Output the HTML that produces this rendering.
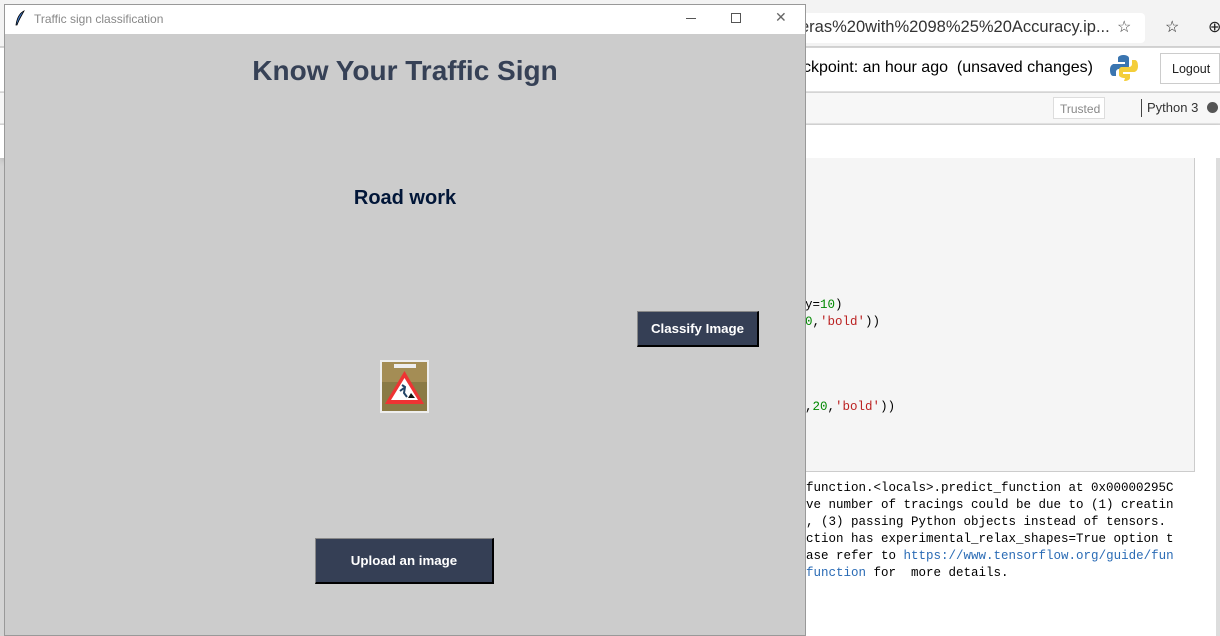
<!DOCTYPE html>
<html><head><style>
*{margin:0;padding:0;box-sizing:border-box}
body{width:1220px;height:636px;overflow:hidden;position:relative;background:#d4d4d4;font-family:"Liberation Sans",sans-serif}
.a{position:absolute}
.mono{font-family:"Liberation Mono",monospace;font-size:12.5px;color:#000;white-space:pre;line-height:17px}
.btn{position:absolute;background:#353f55;color:#fff;font-weight:bold;font-size:13.3px;display:flex;align-items:center;justify-content:center;border:1px solid #888;border-right:2px solid #000;border-bottom:2px solid #000}
</style></head><body>
<div class="a" style="left:0;top:0;width:1220px;height:47px;background:#f3f3f3;border-bottom:1px solid #d0d0d0"></div>
<div class="a" style="left:790px;top:13px;width:355px;height:30px;background:#fff;border-radius:4px"></div>
<div class="a" style="left:800px;top:18px;font-size:16.5px;color:#333">eras%20with%2098%25%20Accuracy.ip...</div>
<div class="a" style="left:1117px;top:17px;font-size:16px;color:#444">☆</div>
<div class="a" style="left:1165px;top:17px;font-size:16px;color:#222">☆</div>
<div class="a" style="left:1208px;top:17px;font-size:16px;color:#222">⊕</div>
<div class="a" style="left:0;top:48px;width:1220px;height:44px;background:#fff;border-bottom:1px solid #e0e0e0"></div>
<div class="a" style="left:803px;top:59px;font-size:16px;color:#000">ckpoint: an hour ago&nbsp; (unsaved changes)</div>
<svg class="a" style="left:1109px;top:53px" width="30" height="30" viewBox="0 0 30 30"><path d="M15 2c-6 0-6 3-6 3v4h7v2H5s-4 0-4 6 3 6 3 6h3v-4s0-3 3-3h7s3 0 3-3V5s0-3-6-3z" fill="#3a75b0"/><path d="M15 28c6 0 6-3 6-3v-4h-7v-2h11s4 0 4-6-3-6-3-6h-3v4s0 3-3 3h-7s-3 0-3 3v5s0 3 6 3z" fill="#f4ce3a"/></svg>
<div class="a" style="left:1160px;top:53px;width:60px;height:31px;border:1px solid #ccc;background:#fff;font-size:12.5px;padding:8px 0 0 11px;color:#222">Logout</div>
<div class="a" style="left:0;top:93px;width:1220px;height:31px;background:#f7f7f7;border-bottom:1px solid #e2e2e2"></div>
<div class="a" style="left:1053px;top:97px;width:52px;height:22px;border:1px solid #ddd;background:#fff;font-size:12px;color:#888;padding:4px 0 0 6px">Trusted</div>
<div class="a" style="left:1141px;top:99px;width:1px;height:18px;background:#444"></div>
<div class="a" style="left:1147px;top:100px;font-size:13px;color:#333">Python 3</div>
<div class="a" style="left:1207px;top:102px;width:11px;height:11px;border-radius:50%;background:#555"></div>
<div class="a" style="left:0;top:125px;width:1220px;height:33px;background:#fff;box-shadow:0 3px 6px rgba(0,0,0,.12)"></div>
<div class="a" style="left:806px;top:158px;width:410px;height:478px;background:#fff"></div>
<div class="a" style="left:806px;top:158px;width:389px;height:314px;background:#f5f5f5;border-right:1px solid #ccc;border-bottom:1px solid #ccc"></div>
<div class="a" style="left:1216px;top:158px;width:4px;height:478px;background:#ddd"></div>
<div class="a mono" style="left:805px;top:297px">y=<span style="color:#080">10</span>)</div>
<div class="a mono" style="left:805px;top:314px"><span style="color:#080">0</span>,<span style="color:#b22">'bold'</span>))</div>
<div class="a mono" style="left:805px;top:399px">,<span style="color:#080">20</span>,<span style="color:#b22">'bold'</span>))</div>
<div class="a mono" style="left:806px;top:480px">function.&lt;locals&gt;.predict_function at 0x00000295C
ve number of tracings could be due to (1) creatin
, (3) passing Python objects instead of tensors.
ction has experimental_relax_shapes=True option t
ase refer to <span style="color:#2a6bb5">https://www.tensorflow.org/guide/fun</span>
<span style="color:#2a6bb5">function</span> for  more details.</div>
<div class="a" style="left:4px;top:4px;width:802px;height:632px;background:#ccc;border:1px solid #999"></div>
<div class="a" style="left:5px;top:5px;width:800px;height:29px;background:#fff"></div>
<svg class="a" style="left:14px;top:10px" width="12" height="16" viewBox="0 0 12 16"><path d="M10 1C6 3 3 8 2 15l1 0C5 9 8 5 10 1z" fill="#3f78c8" stroke="#000" stroke-width=".8"/></svg>
<div class="a" style="left:34px;top:12px;font-size:12px;color:#888">Traffic sign classification</div>
<div class="a" style="left:686px;top:18px;width:10px;height:1px;background:#555"></div>
<div class="a" style="left:731px;top:13px;width:10px;height:10px;border:1px solid #555"></div>
<div class="a" style="left:775px;top:9px;font-size:14px;color:#666">✕</div>
<div class="a" style="left:5px;top:55px;width:800px;text-align:center;font-size:28px;font-weight:bold;color:#364156">Know Your Traffic Sign</div>
<div class="a" style="left:5px;top:187px;width:800px;text-align:center;font-size:20px;font-weight:bold;color:#011638">Road work</div>
<div class="btn" style="left:637px;top:311px;width:122px;height:36px">Classify Image</div>
<div class="a" style="left:380px;top:360px;width:49px;height:53px;background:#eee;padding:2px">
<svg width="45" height="49" viewBox="0 0 45 49"><rect width="45" height="49" fill="#8a7a45"/><rect x="0" y="0" width="45" height="20" fill="#a48d55"/><rect x="12" y="2" width="22" height="4" fill="#eee"/><path d="M22.5 9L42 42H3z" fill="#e33"/><path d="M22.5 16L36 38H9z" fill="#fff"/><path d="M20 23l3 2-1 6 3 4M22 26l-4 3" stroke="#246" stroke-width="2" fill="none"/><path d="M26 36l3-5 4 5z" fill="#111"/></svg></div>
<div class="btn" style="left:315px;top:538px;width:179px;height:46px">Upload an image</div>
</body></html>
